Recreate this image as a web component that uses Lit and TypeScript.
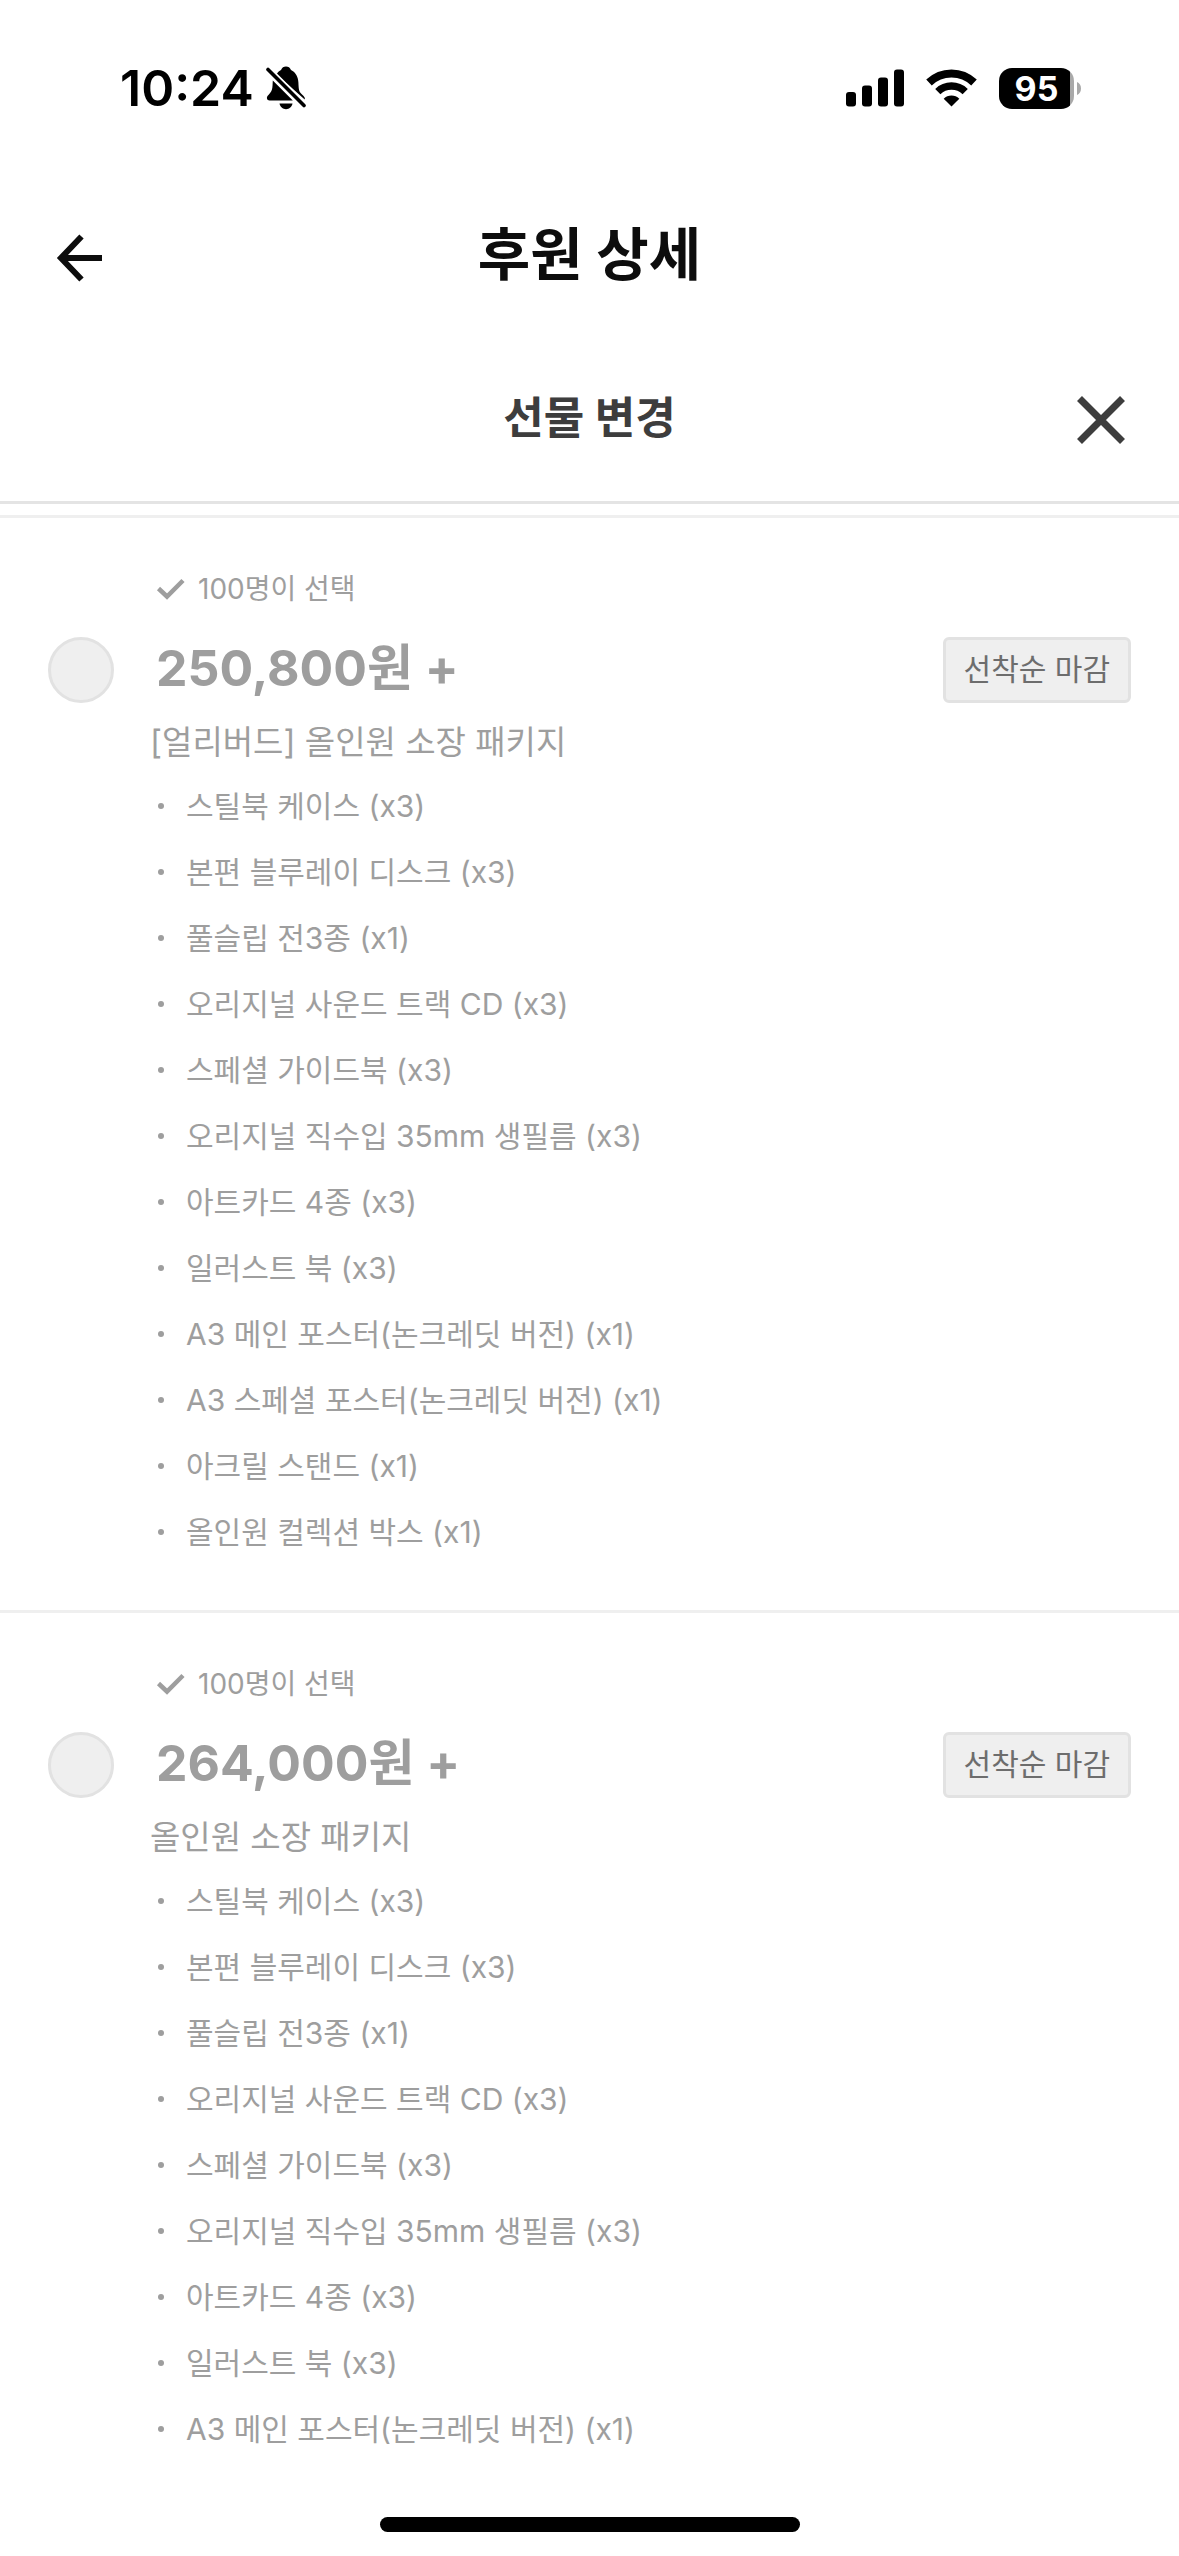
import { LitElement, html, css, svg } from "lit";
import { customElement, property } from "lit/decorators.js";

interface Reward {
  id: string;
  backers: string;
  price: string;
  name: string;
  items: string[];
}

const BASE_ITEMS = [
  "스틸북 케이스 (x3)",
  "본편 블루레이 디스크 (x3)",
  "풀슬립 전3종 (x1)",
  "오리지널 사운드 트랙 CD (x3)",
  "스페셜 가이드북 (x3)",
  "오리지널 직수입 35mm 생필름 (x3)",
  "아트카드 4종 (x3)",
  "일러스트 북 (x3)",
  "A3 메인 포스터(논크레딧 버전) (x1)",
];

const REWARDS: Reward[] = [
  {
    id: "early",
    backers: "100명이 선택",
    price: "250,800원 +",
    name: "[얼리버드] 올인원 소장 패키지",
    items: [
      ...BASE_ITEMS,
      "A3 스페셜 포스터(논크레딧 버전) (x1)",
      "아크릴 스탠드 (x1)",
      "올인원 컬렉션 박스 (x1)",
    ],
  },
  {
    id: "regular",
    backers: "100명이 선택",
    price: "264,000원 +",
    name: "올인원 소장 패키지",
    items: BASE_ITEMS,
  },
];

@customElement("status-bar")
class StatusBar extends LitElement {
  static styles = css`
    :host {
      display: flex;
      align-items: center;
      justify-content: space-between;
      height: 176px;
      padding: 0 98px 0 120px;
      box-sizing: border-box;
      color: #000;
    }
    .group {
      display: flex;
      align-items: center;
    }
    .left {
      gap: 12px;
    }
    .right {
      gap: 22px;
    }
    .time {
      font-size: 50px;
      font-weight: 600;
      line-height: 60px;
    }
    .battery {
      display: flex;
      align-items: center;
      gap: 3px;
    }
    .level {
      width: 75px;
      height: 41px;
      border-radius: 13px;
      background: linear-gradient(to right, #000 71px, #a9a9a9 71px);
      color: #fff;
      font-size: 34px;
      font-weight: 700;
      line-height: 41px;
      text-align: center;
    }
    svg {
      display: block;
    }
  `;

  render() {
    return html`
      <div class="group left">
        <span class="time">10:24</span>
        <svg width="40" height="44" viewBox="0 0 40 44" aria-hidden="true">
          <path d="M10.5 8.2C12 6 13.4 4.8 15 4C16 1.6 17.6.5 20 .5s4 1.100 5 3.500c4.600 2.200 7.200 7 7.400 12.500.2 5.500.5 7.800 1.600 9.800 1.100 1.900 3.600 3.300 4.600 5.200.4.8.2 1.500.1 1.900Z"/>
          <path d="M6.800 14.500L26.800 34.500H3.500C.9 34.500.2 31.600 1.700 29.800 3.300 27.900 5.100 26.400 5.900 23.800 6.700 21 6.600 18 6.800 14.500Z"/>
          <path d="M13.500 37.500h13c-.6 3.300-3.200 5.700-6.500 5.700s-5.900-2.400-6.500-5.700Z"/>
          <path d="M2 3.500L38 39.500" stroke="#fff" stroke-width="7"/>
          <path d="M2 3.500L38 39.500" stroke="#000" stroke-width="3.600" stroke-linecap="round"/>
        </svg>
      </div>
      <div class="group right">
        <svg width="58" height="38" viewBox="0 0 58 38" aria-hidden="true">
          <rect x="0" y="23" width="10" height="14.500" rx="3"/>
          <rect x="16" y="16.500" width="10" height="21" rx="3"/>
          <rect x="32" y="8.500" width="10" height="29" rx="3"/>
          <rect x="48" y=".5" width="10" height="37" rx="3"/>
        </svg>
        <svg width="51" height="38" viewBox="0 0 51 38" aria-hidden="true">
          <g fill="none" stroke="#000">
            <path d="M3 13.500A32.500 32.500 0 0 1 48 13.500" stroke-width="8"/>
            <path d="M11.800 22.600A19.800 19.800 0 0 1 39.200 22.600" stroke-width="7.500"/>
          </g>
          <path d="M25.500 37.500L17.700 29.700A11.200 11.200 0 0 1 33.300 29.700Z"/>
        </svg>
        <div class="battery">
          <div class="level">95</div>
          <svg width="4" height="13" viewBox="0 0 4 13" aria-hidden="true">
            <path d="M0 0C2.500 1 4 3.500 4 6.500S2.500 12 0 13Z" fill="#a9a9a9"/>
          </svg>
        </div>
      </div>
    `;
  }
}

@customElement("reward-card")
class RewardCard extends LitElement {
  @property({ attribute: false }) reward!: Reward;

  static styles = css`
    :host {
      display: block;
      border-top: 3px solid #efefef;
      color: #9e9e9e;
    }
    .card {
      display: grid;
      grid-template-columns: 66px 1fr auto;
      column-gap: 36px;
      align-items: center;
      padding: 51px 48px 45px;
    }
    .meta {
      grid-column: 2 / -1;
      display: flex;
      align-items: center;
      gap: 12px;
      padding-left: 6px;
      margin-bottom: 28px;
      font-size: 28px;
      line-height: 40px;
    }
    .meta svg {
      display: block;
    }
    .radio {
      appearance: none;
      width: 66px;
      height: 66px;
      margin: 0;
      border: 3px solid #e2e2e2;
      border-radius: 50%;
      background: #efefef;
    }
    .price {
      padding: 0 0 4px 6px;
      font-size: 50px;
      font-weight: 700;
      line-height: 62px;
    }
    .badge {
      padding: 0 18px 2px;
      border: 3px solid #e2e2e2;
      border-radius: 6px;
      background: #efefef;
      color: #6d6d6d;
      font-size: 30px;
      line-height: 58px;
    }
    .body {
      grid-column: 2 / -1;
    }
    .name {
      margin: 14px 0 6px;
      font-size: 33px;
      font-weight: 400;
      line-height: 50px;
    }
    .items {
      margin: 0;
      padding: 0;
      list-style: none;
      font-size: 30px;
      line-height: 66px;
    }
    .item {
      display: flex;
      align-items: center;
      gap: 22px;
      padding-left: 8px;
    }
    .item::before {
      content: "";
      width: 6px;
      height: 6px;
      border-radius: 50%;
      background: #9e9e9e;
    }
  `;

  render() {
    const r = this.reward;
    return html`
      <article class="card">
        <div class="meta">
          <svg width="30" height="22" viewBox="0 0 30 22" aria-hidden="true">
            <path d="M2.500 10.500L11 18.500L27 2.500" fill="none" stroke="#9e9e9e" stroke-width="4.500"/>
          </svg>
          <span>${r.backers}</span>
        </div>
        <input class="radio" type="radio" name="reward" id=${r.id} disabled />
        <label class="price" for=${r.id}>${r.price}</label>
        <span class="badge">선착순 마감</span>
        <div class="body">
          <h3 class="name">${r.name}</h3>
          <ul class="items">
            ${r.items.map((item) => html`<li class="item">${item}</li>`)}
          </ul>
        </div>
      </article>
    `;
  }
}

@customElement("app-root")
class AppRoot extends LitElement {
  static styles = css`
    :host {
      display: flex;
      flex-direction: column;
      min-height: 100vh;
      background: #fff;
      font-family: Inter, "Noto Sans CJK KR", sans-serif;
    }
    .bar {
      display: grid;
      grid-template-columns: 1fr auto 1fr;
      align-items: center;
      padding: 0 48px;
    }
    .header {
      height: 162px;
      color: #0d0d0d;
    }
    .subheader {
      height: 163px;
      border-bottom: 3px solid #e4e4e4;
      color: #3d3d3d;
    }
    .title,
    .subtitle {
      grid-column: 2;
      margin: 0;
      padding-bottom: 4px;
      font-weight: 700;
    }
    .title {
      font-size: 57px;
      line-height: 80px;
    }
    .subtitle {
      font-size: 44px;
      line-height: 64px;
    }
    .icon-button {
      width: 60px;
      height: 60px;
      padding: 0;
      border: 0;
      background: none;
      color: inherit;
    }
    .close {
      grid-column: 3;
      justify-self: end;
    }
    .icon-button svg {
      display: block;
    }
    .list {
      flex: 1;
      padding-top: 11px;
    }
    .footer {
      display: flex;
      justify-content: center;
      padding-bottom: 24px;
    }
    .home {
      width: 420px;
      height: 15px;
      border-radius: 8px;
      background: #000;
    }
  `;

  private icon(d: string, width: number) {
    return html`<svg width="60" height="60" viewBox="0 0 60 60" aria-hidden="true">
      ${svg`<path d=${d} fill="none" stroke="currentColor" stroke-width=${width} />`}
    </svg>`;
  }

  render() {
    return html`
      <status-bar></status-bar>
      <header class="bar header">
        <button class="icon-button" aria-label="뒤로">
          ${this.icon("M33.500 9.500L13 31L33.500 52.500M13 31H54", 6)}
        </button>
        <h1 class="title">후원 상세</h1>
      </header>
      <div class="bar subheader">
        <h2 class="subtitle">선물 변경</h2>
        <button class="icon-button close" aria-label="닫기">
          ${this.icon("M8.500 8.500L51.500 51.500M51.500 8.500L8.500 51.500", 7)}
        </button>
      </div>
      <main class="list">
        ${REWARDS.map((r) => html`<reward-card .reward=${r}></reward-card>`)}
      </main>
      <footer class="footer"><div class="home"></div></footer>
    `;
  }
}
